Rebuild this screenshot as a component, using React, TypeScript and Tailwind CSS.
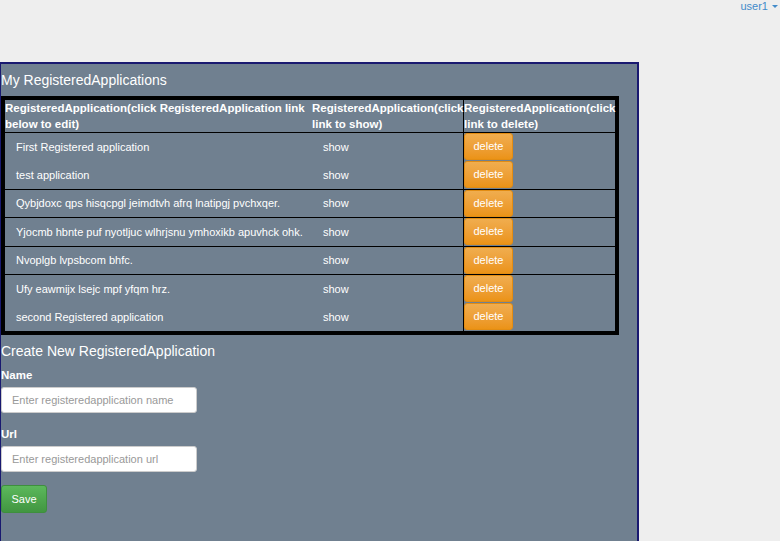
const apps = [
  { name: "First Registered application", line: false, h: "h-[28px]" },
  { name: "test application", line: false, h: "h-[28px]" },
  { name: "Qybjdoxc qps hisqcpgl jeimdtvh afrq lnatipgj pvchxqer.", line: true, h: "h-[28px]" },
  { name: "Yjocmb hbnte puf nyotljuc wlhrjsnu ymhoxikb apuvhck ohk.", line: true, h: "h-[29px]" },
  { name: "Nvoplgb lvpsbcom bhfc.", line: true, h: "h-[28px]" },
  { name: "Ufy eawmijx lsejc mpf yfqm hrz.", line: true, h: "h-[29px]" },
  { name: "second Registered application", line: false, h: "h-[28px]" },
];

function DeleteButton() {
  return (
    <button className="h-[27px] w-[49px] rounded-[3px] border border-[#e38d13] bg-gradient-to-b from-[#f0ad4e] to-[#eb9316] text-[11px] leading-none text-white">
      delete
    </button>
  );
}

export default function App() {
  return (
    <div className="min-h-[541px] bg-[#eeeeee] font-['Liberation_Sans',Arial,sans-serif] text-white">
      {/* top bar */}
      <div className="flex h-[62px] justify-end pr-[2px] pt-[1px]">
        <a className="flex h-[11px] items-center gap-[4px] text-[11px] leading-none text-[#428bca]">
          user1
          <span className="h-0 w-0 border-x-[3px] border-t-[3px] border-x-transparent border-t-[#428bca]" />
        </a>
      </div>

      <div className="-ml-px w-[640px] border-2 border-b-0 border-[#191970] bg-[#708090] pb-[40px]">
        <h3 className="mt-[8px] text-[14px] leading-[16px]">My RegisteredApplications</h3>

        <div className="mt-[8px] w-[618px] border-4 border-black">
          <div className="grid grid-cols-[306px_153px_151px] border-b border-black text-[11.5px] font-bold leading-[16px]">
            <div className="pr-1">RegisteredApplication(click RegisteredApplication link below to edit)</div>
            <div className="border-r border-black pl-px">RegisteredApplication(click link to show)</div>
            <div>RegisteredApplication(click link to delete)</div>
          </div>
          {apps.map((a) => (
            <div
              key={a.name}
              className={`grid grid-cols-[306px_153px_151px] text-[11px] ${a.h} ${a.line ? "border-t border-black" : ""}`}
            >
              <div className="flex items-center pl-[11px]">{a.name}</div>
              <div className="flex items-center border-r border-black pl-[12px]">show</div>
              <div>
                <DeleteButton />
              </div>
            </div>
          ))}
        </div>

        <h3 className="mt-[8px] text-[14px] leading-[16px]">Create New RegisteredApplication</h3>

        <label className="mt-[9px] block text-[11.5px] font-bold leading-[14px]">Name</label>
        <input
          className="mt-[5px] block h-[26px] w-[196px] rounded-[3px] border border-[#cccccc] bg-white pl-[10px] text-[11px] text-[#555] placeholder:text-[#999]"
          placeholder="Enter registeredapplication name"
        />

        <label className="mt-[14px] block text-[11.5px] font-bold leading-[14px]">Url</label>
        <input
          className="mt-[5px] block h-[26px] w-[196px] rounded-[3px] border border-[#cccccc] bg-white pl-[10px] text-[11px] text-[#555] placeholder:text-[#999]"
          placeholder="Enter registeredapplication url"
        />

        <button className="mt-[13px] h-[28px] w-[46px] rounded-[3px] border border-[#3e8f3e] bg-gradient-to-b from-[#5cb85c] to-[#419641] text-[11px] text-white">
          Save
        </button>
      </div>
    </div>
  );
}
